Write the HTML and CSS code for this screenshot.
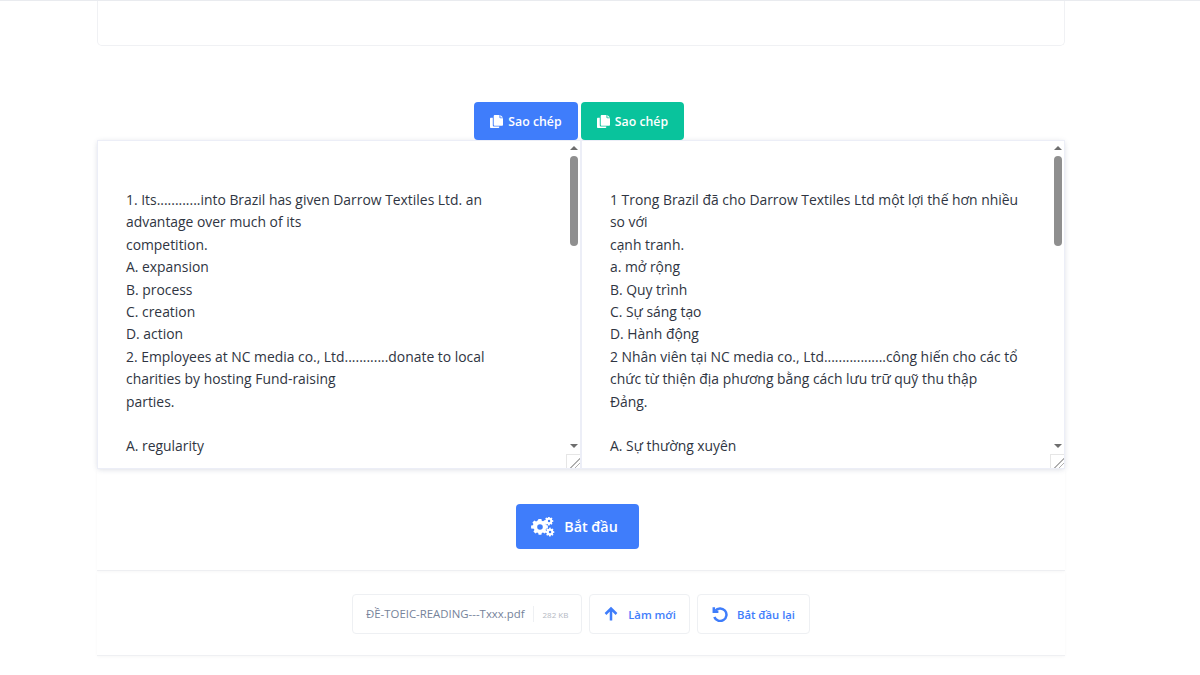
FILE: index.html
```html
<!DOCTYPE html>
<html lang="vi">
<head>
<meta charset="utf-8">
<title>Dịch tài liệu</title>
<link rel="stylesheet" href="styles.css">
</head>
<body>
<main class="page">
  <div class="top-card"></div>
  <div class="copy-row">
    <button class="btn-copy blue"><svg class="copy-icon" viewBox="0 0 14 14"><path d="M4 1.2C4 .6 4.5 0 5.1 0h5.1v2.6c0 .5.4.9.9.9H14v6.9c0 .6-.5 1.1-1.1 1.1H5.1C4.5 11.500 4 11 4 10.400z"/><path d="M11.200 0 14 2.600h-2.800z"/><path d="M3 3v8c0 .8.600 1.500 1.400 1.500H10v.4c0 .6-.5 1.100-1.100 1.100H1.100C.5 14 0 13.500 0 12.900V4.100C0 3.500.5 3 1.100 3z"/></svg>Sao chép</button>
    <button class="btn-copy green"><svg class="copy-icon" viewBox="0 0 14 14"><path d="M4 1.2C4 .6 4.5 0 5.1 0h5.1v2.6c0 .5.4.9.9.9H14v6.9c0 .6-.5 1.1-1.1 1.1H5.1C4.5 11.500 4 11 4 10.400z"/><path d="M11.200 0 14 2.600h-2.800z"/><path d="M3 3v8c0 .8.600 1.500 1.400 1.500H10v.4c0 .6-.5 1.100-1.100 1.100H1.100C.5 14 0 13.500 0 12.900V4.100C0 3.500.5 3 1.100 3z"/></svg>Sao chép</button>
  </div>
  <div class="panels">
    <section class="panel">
      <div class="text">1. Its............into Brazil has given Darrow Textiles Ltd. an advantage over much of its<br>competition.<br>A. expansion<br>B. process<br>C. creation<br>D. action<br>2. Employees at NC media co., Ltd............donate to local charities by hosting Fund-raising<br>parties.<br><br>A. regularity</div>
      <div class="scrollbar"><span class="arrow up"></span><span class="track"><span class="thumb"></span></span><span class="arrow down"></span></div>
      <span class="grip"></span>
    </section>
    <section class="panel">
      <div class="text">1 Trong Brazil đã cho Darrow Textiles Ltd một lợi thế hơn nhiều so với<br>cạnh tranh.<br>a. mở rộng<br>B. Quy trình<br>C. Sự sáng tạo<br>D. Hành động<br>2 Nhân viên tại NC media co., Ltd.................công hiến cho các tổ chức từ thiện địa phương bằng cách lưu trữ quỹ thu thập<br>Đảng.<br><br>A. Sự thường xuyên</div>
      <div class="scrollbar"><span class="arrow up"></span><span class="track"><span class="thumb"></span></span><span class="arrow down"></span></div>
      <span class="grip"></span>
    </section>
  </div>
  <div class="start-row">
    <button class="btn-start"><svg class="gear-icon" viewBox="0 0 24 20"><path fill-rule="evenodd" d="M7.600 3.600h2.800l.4 1.800 1.200.5 1.600-1 2 2-1 1.600.5 1.200 1.800.4v2.800l-1.800.4-.5 1.200 1 1.600-2 2-1.600-1-1.200.5-.4 1.800H7.600l-.4-1.800-1.200-.5-1.600 1-2-2 1-1.600-.5-1.200L.1 13V10.200l1.800-.4.5-1.200-1-1.600 2-2 1.600 1 1.200-.5zM9 8.800a2.800 2.800 0 1 0 0 5.600 2.800 2.800 0 0 0 0-5.600z" transform="translate(0 -1.600)"/><path fill-rule="evenodd" d="M18.500 0l1 .1.3 1.200.7.3 1.100-.6 1 1-.6 1.100.3.700 1.200.3v1.400l-1.200.3-.3.7.6 1.100-1 1-1.100-.6-.7.3-.3 1.200h-1.400l-.3-1.200-.7-.3-1.100.6-1-1 .6-1.100-.3-.7-1.200-.3V4.100l1.200-.3.3-.7-.6-1.100 1-1 1.100.6.700-.3zM19 3.500a1.300 1.300 0 1 0 0 2.600 1.300 1.300 0 0 0 0-2.600z" transform="translate(0 -.5) scale(.95)"/><path fill-rule="evenodd" d="M18.500 10l1 .1.3 1.200.7.3 1.100-.6 1 1-.6 1.100.3.700 1.200.3v1.400l-1.200.3-.3.7.6 1.100-1 1-1.100-.6-.7.3-.3 1.200h-1.400l-.3-1.200-.7-.3-1.100.6-1-1 .6-1.100-.3-.7-1.200-.3v-1.400l1.200-.3.3-.7-.6-1.100 1-1 1.100.6.700-.3zM19 13.500a1.300 1.300 0 1 0 0 2.600 1.300 1.300 0 0 0 0-2.600z" transform="translate(1 1) scale(.95)"/></svg>Bắt đầu</button>
  </div>
  <div class="file-row">
    <div class="chip file"><span class="name">ĐỀ-TOEIC-READING---Txxx.pdf</span><span class="size">282 KB</span></div>
    <button class="chip action refresh"><svg class="action-icon" viewBox="0 0 16 16"><path d="M8 14.500V2.500M2.500 8 8 2.500 13.500 8"/></svg>Làm mới</button>
    <button class="chip action restart"><svg class="action-icon" viewBox="0 0 16 16"><path d="M3.200 4.800A6.300 6.300 0 1 1 2.300 11"/><path d="M1.800 1.200v4.600h4.600"/></svg>Bắt đầu lại</button>
  </div>
</main>
</body>
</html>
```

FILE: styles.css
```css
* { box-sizing: border-box; }
html, body { margin: 0; height: 100%; overflow: hidden; background: #fff; }
body { font-family: "Open Sans", "Noto Sans", sans-serif; color: #2f3542; border-top: 1px solid #e9ebef; }
button { font-family: inherit; cursor: pointer; }
.page { width: 968px; margin-left: 97px; }
.top-card { height: 45px; border: 1px solid #f0f1f4; border-top: 0; border-radius: 0 0 5px 5px; }
.copy-row { display: flex; justify-content: center; gap: 3px; margin-top: 56px; height: 38px; padding-right: 4px; }
.btn-copy { display: flex; align-items: center; justify-content: center; gap: 5px; height: 38px; border: 0; border-radius: 4px; color: #fff; font-size: 12.300px; font-weight: 600; padding: 0; }
.btn-copy.blue { width: 104px; background: #3f7dfb; }
.btn-copy.green { width: 103px; background: #09c39c; }
.copy-icon { width: 13px; height: 13px; fill: #fff; }
.panels { display: flex; height: 329px; border-radius: 4px; box-shadow: 0 1px 5px rgba(90, 100, 130, .2); }
.panel { position: relative; flex: 1; display: flex; overflow: hidden; border: 1px solid #eceef7; background: #fff; }
.text { flex: 1; margin-top: 48px; height: 271px; padding: 0 28px; overflow: hidden; font-size: 13.900px; line-height: 22.400px; color: #2f3542; }
.scrollbar { width: 13px; display: flex; flex-direction: column; align-items: center; height: 312px; }
.arrow { width: 0; height: 0; border-left: 4px solid transparent; border-right: 4px solid transparent; margin: 5px 0 3px; }
.arrow.up { border-bottom: 4px solid #6e6e6e; }
.arrow.down { border-top: 4px solid #6e6e6e; margin: 3px 0 5px; }
.track { flex: 1; width: 100%; padding-top: 3px; display: flex; justify-content: center; align-items: flex-start; }
.thumb { width: 8px; height: 90px; border-radius: 4px; background: #8f8f8f; }
.grip { position: absolute; right: 0; bottom: 0; width: 14px; height: 14px; border: 1px solid #e6e6e6; border-width: 1px 0 0 1px; background: linear-gradient(135deg, transparent 60%, #b0b0b0 60%, #b0b0b0 66%, transparent 66%, transparent 78%, #b0b0b0 78%, #b0b0b0 84%, transparent 84%); }
.start-row { display: flex; justify-content: center; padding: 35px 7px 21px 0; border-bottom: 1px solid #eff0f3; box-shadow: 0 1px 3px rgba(0, 0, 0, .03); }
.btn-start { display: flex; align-items: center; justify-content: center; gap: 9px; width: 123px; height: 45px; border: 0; border-radius: 4px; background: #3f7dfb; color: #fff; font-size: 14.300px; font-weight: 600; padding: 0 6px 0 0; }
.gear-icon { width: 24px; height: 20px; fill: #fff; }
.file-row { display: flex; justify-content: center; gap: 7px; padding-top: 23px; height: 85px; border-bottom: 1px solid #eff0f3; box-shadow: 0 1px 3px rgba(0, 0, 0, .03); }
.chip { height: 40px; display: flex; align-items: center; background: #fff; border: 1px solid #eef0f3; border-radius: 4px; padding: 0; }
.file { width: 230px; padding-left: 13px; }
.name { font-size: 11.400px; color: #76839a; padding-right: 8px; border-right: 1px solid #eef0f3; line-height: 16px; }
.size { font-size: 8px; color: #b4b9c3; margin-left: 9px; }
.action { justify-content: center; color: #3f7dfb; font-size: 11.300px; font-weight: 600; gap: 9px; }
.refresh { width: 101px; }
.restart { width: 113px; }
.action-icon { width: 16px; height: 16px; fill: none; stroke: #3f7dfb; stroke-width: 2.500; }
```
